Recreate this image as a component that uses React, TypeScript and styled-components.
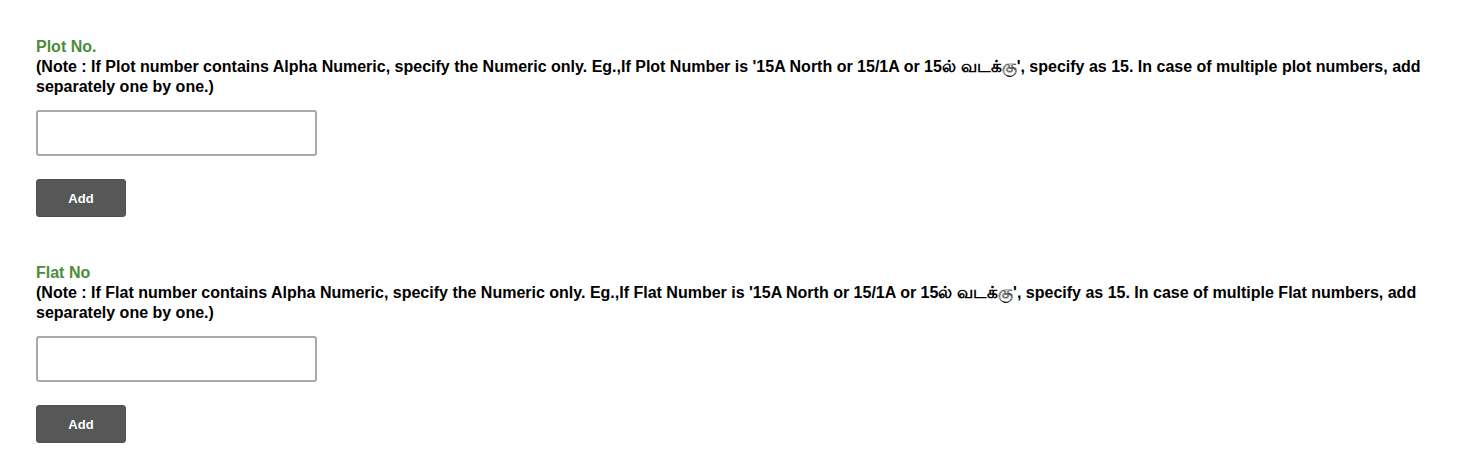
import React from "react";
import styled, { createGlobalStyle } from "styled-components";

const GlobalStyle = createGlobalStyle`
  body {
    margin: 0;
    background: #ffffff;
    font-family: "Liberation Sans", Arial, "Noto Sans", sans-serif;
  }
`;

const Page = styled.div`
  padding: 37px 36px 0 36px;
  display: flex;
  flex-direction: column;
  gap: 46px;
`;

const Section = styled.div`
  display: flex;
  flex-direction: column;
  align-items: flex-start;
`;

const Title = styled.div`
  color: #4a8c3a;
  font-size: 16px;
  font-weight: bold;
  line-height: 20px;
`;

const Note = styled.div`
  color: #000;
  font-size: 16px;
  font-weight: bold;
  line-height: 20px;
`;

const Tamil = styled.span`
  font-size: 17px;
  line-height: 1;
`;

const Input = styled.input`
  box-sizing: border-box;
  margin-top: 13px;
  width: 281px;
  height: 46px;
  border: 2px solid #a9a9a9;
  border-radius: 3px;
  background: #fff;
  padding: 0 8px;
  font-size: 14px;
  outline: none;
`;

const AddButton = styled.button`
  margin-top: 23px;
  width: 90px;
  height: 38px;
  border: 1px solid #505050;
  border-radius: 3px;
  background: #575757;
  color: #fff;
  font-family: "Liberation Sans", Arial, sans-serif;
  font-size: 13px;
  font-weight: bold;
  cursor: pointer;
`;

interface FieldProps {
  title: string;
  kind: string;
}

const Field = ({ title, kind }: FieldProps) => (
  <Section>
    <Title>{title}</Title>
    <Note>
      (Note : If {kind} number contains Alpha Numeric, specify the Numeric only. Eg.,If {kind} Number is '15A North or
      15/1A or 15<Tamil>ல் வடக்கு</Tamil>', specify as 15. In case of multiple {kind === "Plot" ? "plot" : kind} numbers,
      add separately one by one.)
    </Note>
    <Input type="text" />
    <AddButton type="button">Add</AddButton>
  </Section>
);

export default function App() {
  return (
    <>
      <GlobalStyle />
      <Page>
        <Field title="Plot No." kind="Plot" />
        <Field title="Flat No" kind="Flat" />
      </Page>
    </>
  );
}
